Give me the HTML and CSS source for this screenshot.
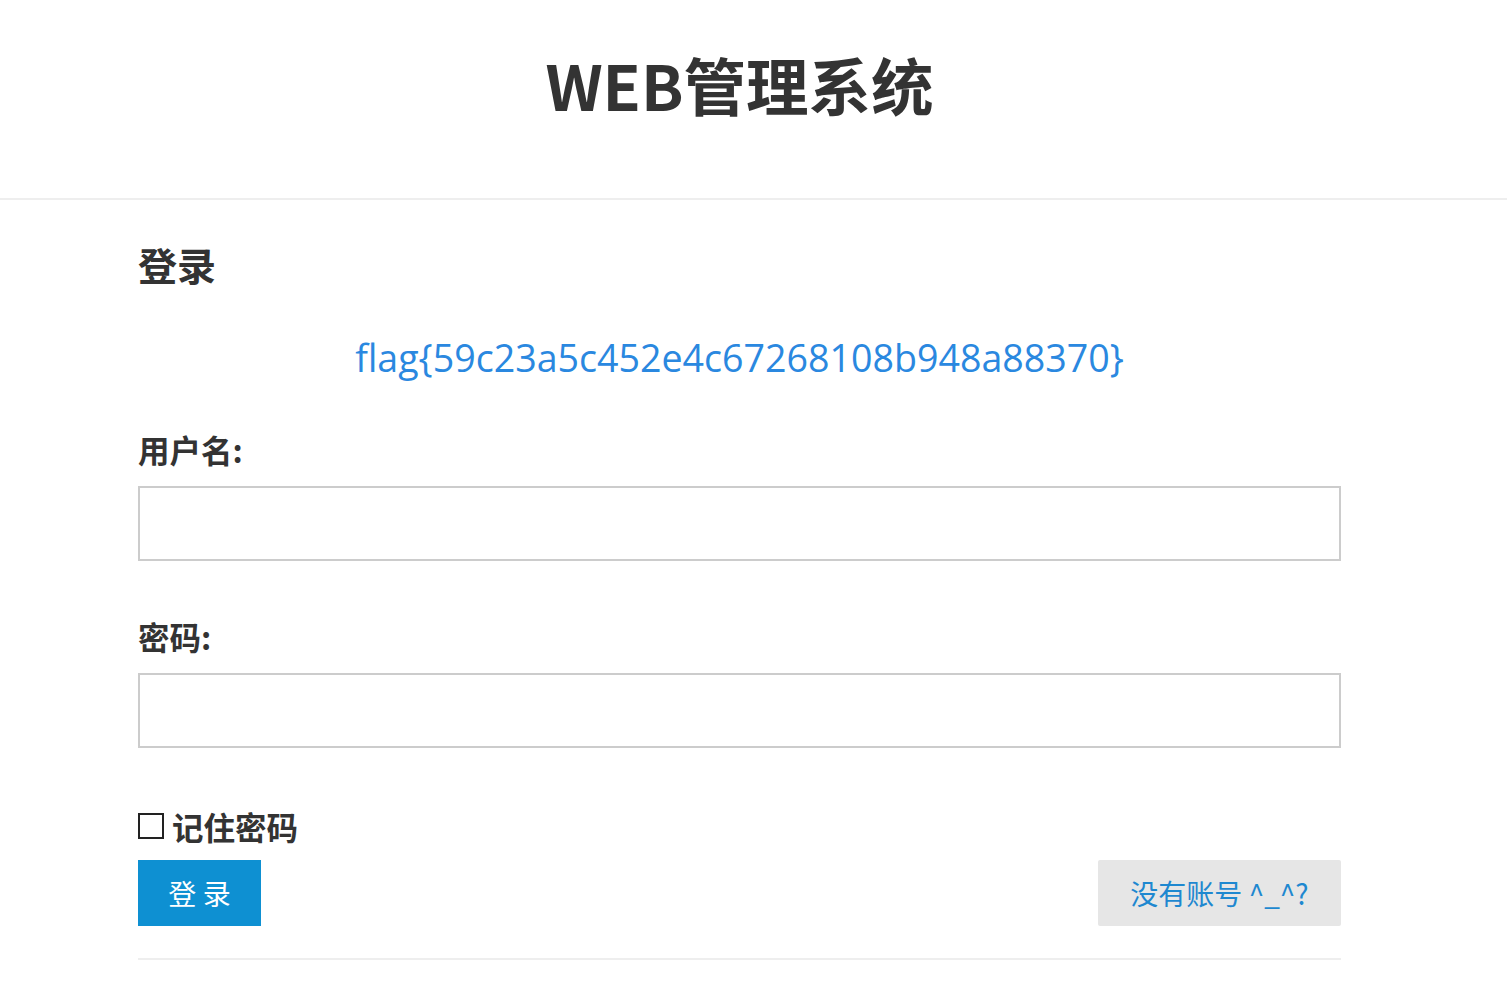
FILE: index.html
```html
<!DOCTYPE html>
<html lang="zh-CN">
<head>
<meta charset="utf-8">
<title>WEB管理系统</title>
<link rel="stylesheet" href="styles.css">
</head>
<body>
<header class="header">
  <h1 class="title">WEB管理系统</h1>
</header>
<main class="main">
  <h2 class="heading">登录</h2>
  <p class="flag">flag{59c23a5c452e4c67268108b948a88370}</p>
  <form class="form">
    <label class="label">用户名:</label>
    <input class="input" type="text">
    <label class="label label-pw">密码:</label>
    <input class="input" type="password">
    <label class="remember"><span class="box"></span>记住密码</label>
    <div class="actions">
      <button type="button" class="btn-login">登 录</button>
      <button type="button" class="btn-register">没有账号 ^_^?</button>
    </div>
  </form>
  <div class="rule"></div>
</main>
</body>
</html>
```

FILE: styles.css
```css
* { box-sizing: border-box; }
html, body { margin: 0; padding: 0; background: #fff; }
body {
  font-family: "Noto Sans CJK SC", "Open Sans", sans-serif;
  color: #333;
  width: 1507px;
  height: 983px;
  overflow: hidden;
}
.header {
  height: 200px;
  border-bottom: 2px solid #eeeeee;
  display: flex;
  justify-content: center;
  padding-right: 28px;
}
.title {
  margin: 0;
  margin-top: 40px;
  font-size: 62.5px;
  font-weight: 700;
  line-height: 88px;
  color: #333;
  letter-spacing: 0;
}
.main {
  margin-left: 138px;
  width: 1203px;
}
.heading {
  margin: 34px 0 0;
  font-size: 39px;
  line-height: 60px;
  font-weight: 700;
  color: #333;
}
.flag {
  margin: 38px 0 0;
  text-align: center;
  font-family: "Open Sans", sans-serif;
  font-size: 37.6px;
  line-height: 52px;
  color: #2a88e0;
}
.form { display: flex; flex-direction: column; }
.label {
  margin-top: 43px;
  font-size: 31.5px;
  font-weight: 700;
  line-height: 44px;
  color: #333;
}
.label-pw { margin-top: 53px; }
.input {
  margin-top: 15px;
  width: 100%;
  height: 75px;
  border: 2px solid #cccccc;
  background: #fff;
  outline: none;
}
.remember {
  margin-top: 56px;
  display: flex;
  align-items: center;
  gap: 8px;
  font-size: 31.5px;
  font-weight: 700;
  line-height: 44px;
  color: #333;
}
.box {
  width: 26px;
  height: 26px;
  border: 2px solid #222;
  background: #fff;
}
.actions {
  margin-top: 12px;
  display: flex;
  justify-content: space-between;
}
.btn-login, .btn-register {
  height: 66px;
  border: none;
  font-family: "Noto Sans CJK SC", sans-serif;
  font-size: 28px;
  cursor: pointer;
}
.btn-login {
  width: 123px;
  background: #0e90d2;
  color: #fff;
}
.btn-register {
  width: 243px;
  background: #e6e6e6;
  color: #1e88d0;
  border-radius: 2px;
}
.rule {
  margin-top: 32px;
  height: 2px;
  background: #eeeeee;
}
```
